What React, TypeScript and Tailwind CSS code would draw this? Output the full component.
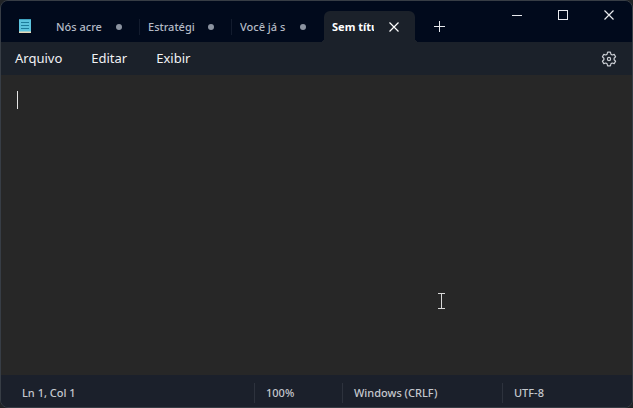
import React, {useState} from 'react';

type Tab = {
    id: number;
    title: string;
    saved: boolean;
};

const tabs: Tab[] = [
    {id: 1, title: 'Nós acre', saved: false},
    {id: 2, title: 'Estratégi', saved: false},
    {id: 3, title: 'Você já s', saved: false},
    {id: 4, title: 'Sem títu', saved: true},
];

const menu = ['Arquivo', 'Editar', 'Exibir'];

const NotepadIcon = () => (
    <svg width="14" height="16" viewBox="0 0 14 16" aria-hidden="true">
        <rect x="1" y="1" width="12" height="14" rx="1" fill="#5cc4de"/>
        <rect x="1" y="1" width="12" height="1" fill="#3fa3c0"/>
        <rect x="1" y="13.500" width="12" height="1.500" fill="#e8d8b8"/>
        <path d="M3 4.500h8M3 7.500h8M3 10.500h8" stroke="#1d7d9c" strokeWidth="1"/>
    </svg>
);

const CloseIcon = () => (
    <svg width="10" height="10" viewBox="0 0 10 10" fill="none" stroke="currentColor" strokeWidth="1.2" aria-hidden="true">
        <path d="M0.5 0.5l9 9M9.5 0.5l-9 9"/>
    </svg>
);

const GearIcon = () => (
    <svg width="16" height="16" viewBox="0 0 16 16" fill="none" stroke="currentColor" strokeWidth="1.2" strokeLinejoin="round" aria-hidden="true">
        <path d="M6.600 1.200h2.800l.5 2 1.300.8 2-.6 1.400 2.400-1.500 1.400v1.600l1.500 1.400-1.400 2.400-2-.6-1.300.8-.5 2H6.600l-.5-2-1.300-.8-2 .6-1.400-2.400 1.500-1.400V7.200L1.400 5.800l1.400-2.400 2 .6 1.300-.8z"/>
        <circle cx="8" cy="8" r="1.600"/>
    </svg>
);

const App = () => {
    const [text, setText] = useState('');
    const [active, setActive] = useState(4);

    return (
        <div className="min-h-screen bg-[#202326] font-['Noto_Sans','Open_Sans',sans-serif]">
            <div className="flex min-h-screen flex-col overflow-hidden rounded-lg border border-[#373d45] bg-[#1b202b]">
                <header className="flex h-[41px] items-start bg-[#010a1c] text-[#e8eaee]">
                    <div className="flex h-full w-[47px] shrink-0 items-center justify-center pt-2">
                        <NotepadIcon/>
                    </div>
                    <div className="flex h-full items-end" role="tablist">
                        {tabs.map((tab) => (
                            <div
                                key={tab.id}
                                className={
                                    tab.id === active
                                        ? 'relative flex h-[31px] w-[91px] items-center rounded-t-md bg-[#1b212a] pl-2 text-white'
                                        : 'flex h-[31px] w-[92px] items-center pl-2 text-[#b4bac5]'
                                }
                            >
                                <button
                                    type="button"
                                    role="tab"
                                    aria-selected={tab.id === active}
                                    onClick={() => setActive(tab.id)}
                                    className={
                                        tab.id === active
                                            ? 'w-[42px] overflow-hidden text-left text-[11px] leading-4 font-bold whitespace-nowrap'
                                            : 'w-12 overflow-hidden text-left text-[11px] leading-4 font-medium whitespace-nowrap'
                                    }
                                >
                                    {tab.title}
                                </button>
                                {tab.saved ? (
                                    <button type="button" aria-label="Fechar guia" className="ml-3 flex size-4 items-center justify-center">
                                        <CloseIcon/>
                                    </button>
                                ) : (
                                    <span className="ml-3 size-[6px] rounded-full bg-[#8b93a0]"/>
                                )}
                                {tab.id < active - 1 && <span className="ml-auto h-4 w-px bg-[#131c2e]"/>}
                                {tab.id === active && (
                                    <>
                                        <span className="absolute right-full bottom-0 size-1 bg-[radial-gradient(circle_at_top_left,transparent_4px,#1b212a_4px)]"/>
                                        <span className="absolute bottom-0 left-full size-1 bg-[radial-gradient(circle_at_top_right,transparent_4px,#1b212a_4px)]"/>
                                    </>
                                )}
                            </div>
                        ))}
                        <button type="button" aria-label="Nova guia" className="ml-2 flex h-[31px] w-8 items-center justify-center">
                            <svg width="11" height="11" viewBox="0 0 11 11" stroke="currentColor" aria-hidden="true">
                                <path d="M5.5 0v11M0 5.5h11"/>
                            </svg>
                        </button>
                    </div>
                    <div className="ml-auto flex">
                        <button type="button" aria-label="Minimizar" className="flex h-7 w-[46px] items-center justify-center">
                            <svg width="10" height="10" viewBox="0 0 10 10" stroke="currentColor" aria-hidden="true">
                                <path d="M0 5.5h10"/>
                            </svg>
                        </button>
                        <button type="button" aria-label="Maximizar" className="flex h-7 w-[46px] items-center justify-center">
                            <svg width="10" height="10" viewBox="0 0 10 10" fill="none" stroke="currentColor" aria-hidden="true">
                                <rect x="0.5" y="0.5" width="9" height="9"/>
                            </svg>
                        </button>
                        <button type="button" aria-label="Fechar" className="flex h-7 w-[46px] items-center justify-center">
                            <CloseIcon/>
                        </button>
                    </div>
                </header>

                <nav className="flex h-[33px] items-center gap-[29px] bg-[#1b212a] pr-[15px] pl-[14px] text-[13px] text-[#f1f2f4]">
                    {menu.map((item) => (
                        <button key={item} type="button">{item}</button>
                    ))}
                    <button type="button" aria-label="Configurações" className="ml-auto text-[#c9ccd2]">
                        <GearIcon/>
                    </button>
                </nav>

                <main className="relative flex flex-1 bg-[#272727]">
                    <textarea
                        aria-label="Editor de texto"
                        value={text}
                        onChange={(e) => setText(e.target.value)}
                        className="flex-1 resize-none bg-transparent px-4 py-4 text-sm text-white outline-none"
                    />
                    {text === '' && <span className="pointer-events-none absolute top-4 left-4 h-[18px] w-px bg-[#e4e4e4]"/>}
                    <svg
                        className="pointer-events-none absolute right-[187px] bottom-[66px]"
                        width="7"
                        height="16"
                        viewBox="0 0 7 16"
                        fill="none"
                        stroke="#d8d8d8"
                        aria-hidden="true"
                    >
                        <path d="M0 0.5h7M0 15.5h7M3.5 0v16"/>
                    </svg>
                </main>

                <footer className="flex h-8 items-center bg-[#1b202b] pt-1 text-[11px] leading-5 font-medium text-[#c5c8ce]">
                    <span className="flex-1 pl-[21px]">Ln 1, Col 1</span>
                    <span className="w-[88px] border-l border-[#2d323d] pl-[11px]">100%</span>
                    <span className="w-40 border-l border-[#2d323d] pl-[11px]">Windows (CRLF)</span>
                    <span className="w-[130px] border-l border-[#2d323d] pl-[11px]">UTF-8</span>
                </footer>
            </div>
        </div>
    );
};

export default App;
